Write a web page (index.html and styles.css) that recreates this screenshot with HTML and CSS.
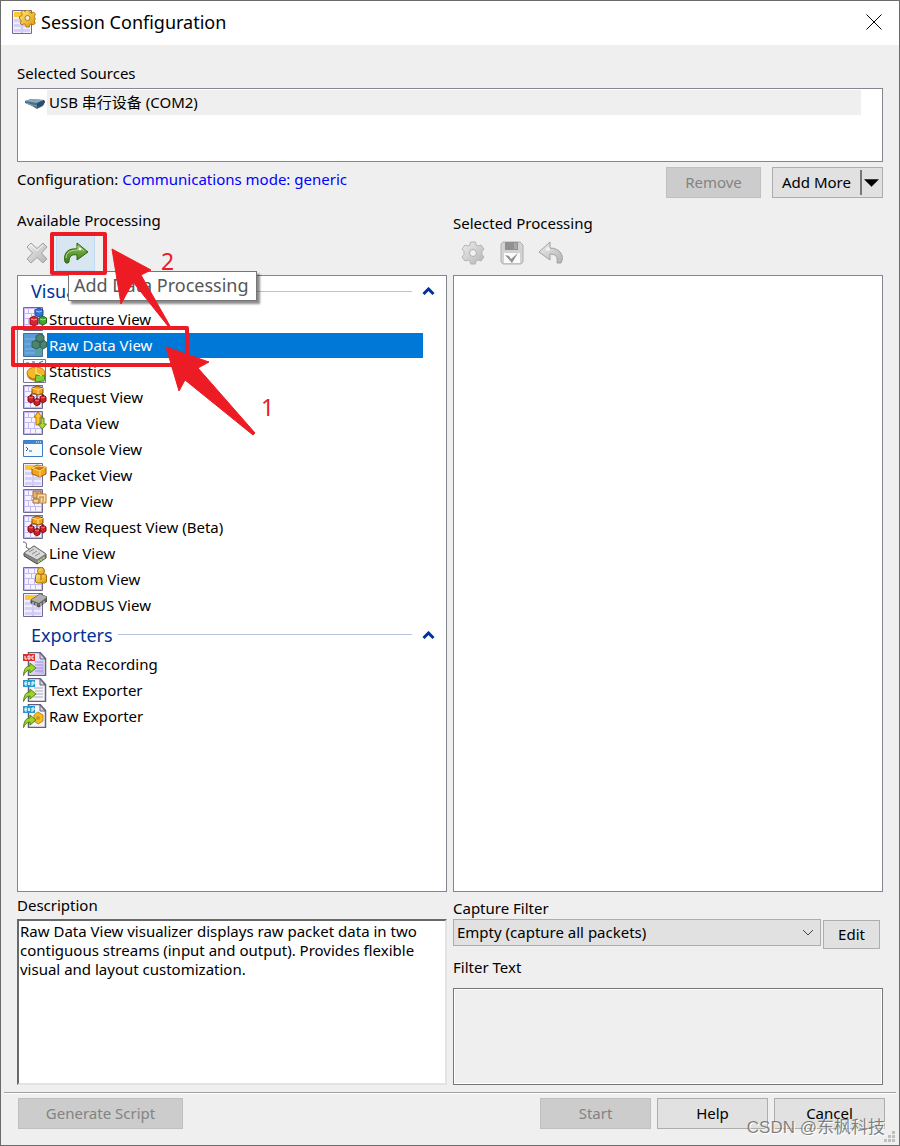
FILE: index.html
```html
<!DOCTYPE html>
<html lang="en">
<head>
    <meta charset="UTF-8">
    <meta name="viewport" content="width=device-width, initial-scale=1">
    <title>Session Configuration</title>
    <link rel="stylesheet" href="styles.css">
</head>
<body>
    <!-- Shared icon parts -->
    <svg class="icon-defs" aria-hidden="true">
        <defs>
            <linearGradient id="lilac" x1="0" y1="0" x2="1" y2="1">
                <stop offset="0" stop-color="#ffffff"/>
                <stop offset="1" stop-color="#bdb0f5"/>
            </linearGradient>
            <linearGradient id="gold" x1="0" y1="0" x2="1" y2="1">
                <stop offset="0" stop-color="#ffe680"/>
                <stop offset="1" stop-color="#dc9a08"/>
            </linearGradient>
            <linearGradient id="green" x1="0" y1="0" x2="0" y2="1">
                <stop offset="0" stop-color="#8cc04b"/>
                <stop offset="1" stop-color="#3c7c1c"/>
            </linearGradient>
            <linearGradient id="silver" x1="0" y1="0" x2="1" y2="1">
                <stop offset="0" stop-color="#eeeeee"/>
                <stop offset="1" stop-color="#b4b4b4"/>
            </linearGradient>
            <symbol id="grid" viewBox="0 0 24 24">
                <path d="M.5 .5h19v23H.5z" fill="#c3b8f5" stroke="#6d6a94"/>
                <path d="M2 2h3v4H2zM6 2h5v4H6zM12 2h6v4h-6zM2 7h6v4H2zM9 7h4v4H9zM14 7h4v4h-4zM2 12h3v5H2zM6 12h5v5H6zM12 12h6v5h-6zM2 18h5v4H2zM8 18h4v4H8zM13 18h5v4h-5z" fill="#f6f4ff"/>
            </symbol>
            <symbol id="sheet" viewBox="0 0 24 24">
                <path d="M.5 .5h19v23H.5z" fill="#f0edff" stroke="#6d6a94"/>
                <path d="M2 2h16v5H2z" fill="#ffc832"/>
                <path d="M2 9h7v3H2zM11 9h7v3h-7zM2 14h7v3H2zM11 14h7v3h-7zM2 19h7v3H2zM11 19h7v3h-7z" fill="#d6cff8"/>
                <path d="M10 8v15" stroke="#b3a9e0"/>
            </symbol>
            <symbol id="boxes" viewBox="0 0 24 24">
                <path d="M8 13V9h12v4M14 8v6" fill="none" stroke="#5c3030"/>
                <path d="m9 3 5-2 6 2v5l-4 2-7-2z" fill="#f0a21b" stroke="#915006"/>
                <path d="m9 3 6 2 5-2M15 5v4" fill="none" stroke="#ffe195"/>
                <path d="m5 12 3-2 3 2v4l-3 2-3-2zM17 12l3-2 3 2v4l-3 2-3-2zM11 15l3-2 3 2v4l-3 2-3-2z" fill="#cf1e24" stroke="#7c0d12"/>
                <path d="m6 12 2 1 2-1M18 12l2 1 2-1M12 15l2 1 2-1" fill="none" stroke="#f5827c"/>
            </symbol>
            <symbol id="export-page" viewBox="0 0 24 24">
                <path d="M5.500 .5H17l5.500 6v17h-17z" fill="#f6f5fb" stroke="#62607c" stroke-width="1.500"/>
                <path d="M17 1v6h5z" fill="#d8d4e8" stroke="#62607c"/>
            </symbol>
            <symbol id="export-arrow" viewBox="0 0 24 24">
                <path d="M.5 23.500C1 17 3 14 7 14v-3l6 5-6 5v-3c-3 0-5 2-6.500 5.500z" fill="#9ed32a" stroke="#4f8414"/>
            </symbol>
        </defs>
    </svg>

    <main class="dialog">
        <header class="titlebar">
            <svg class="icon" viewBox="0 0 24 24" aria-hidden="true">
                <use href="#sheet"/>
                <path d="m14.500 0 3 .2.500 2.300 1.500.700 2-1.200 2 2.200-1.200 2 .7 1.500v2l-.8 1.300 1.200 2-2 2-2-1.200-1.500.700-.7 2.500h-3l-.7-2.500-1.500-.7-2 1.200-2-2 1.200-2-.7-1.500L7.500 9V6.500l2.200-.7.600-1.500-1.100-2 2-2 2 1.200z" fill="url(#gold)" stroke="#b57a0a"/>
                <circle cx="15.500" cy="8" r="2.500" fill="#f4f1e0" stroke="#b57a0a"/>
            </svg>
            <h1 class="title">Session Configuration</h1>
            <button class="close-button" type="button" aria-label="Close">
                <svg viewBox="0 0 16 16"><path d="m.5.500 15 15M15.500.500l-15 15" stroke="#000" fill="none"/></svg>
            </button>
        </header>

        <form class="content">
            <section class="sources">
                <h2 class="label">Selected Sources</h2>
                <ul class="source-list">
                    <li class="source">
                        <svg class="icon" viewBox="0 0 24 24" aria-hidden="true">
                            <path d="m2 10 6-2 13 1 1 2-2 4-6 3-5-3-7-3z" fill="#4b6f8b"/>
                            <path d="m2 10 6-2 13 1-7 3z" fill="#88a9bd"/>
                            <path d="m14 12 7-3 1 2-2 3-6 3z" fill="#2d4d67"/>
                            <path d="m3 12 6 2 5 1" stroke="#7d9bb0" fill="none"/>
                        </svg>
                        <span class="source-name">USB 串行设备 (COM2)</span>
                    </li>
                </ul>
            </section>

            <div class="config-row">
                <p class="config-text">Configuration: <a href="#mode">Communications mode: generic</a></p>
                <button class="button remove-button" type="button" disabled>Remove</button>
                <div class="split-button">
                    <button class="split-main" type="button">Add More</button>
                    <button class="split-arrow" type="button" aria-label="More sources">
                        <svg viewBox="0 0 16 8"><path d="M0 0h16L8 8z"/></svg>
                    </button>
                </div>
            </div>

            <div class="columns">
                <section class="column available">
                    <h2 class="label">Available Processing</h2>
                    <div class="toolbar">
                        <button class="tool" type="button" aria-label="Delete" disabled>
                            <svg class="icon" viewBox="0 0 24 24">
                                <path d="m6 2 6 5.500L18 2l4 4-5.500 6 5.500 6-4 4-6-5.500L6 22l-4-4 5.500-6L2 6z" fill="url(#silver)" stroke="#a0a0a0" stroke-linejoin="round"/>
                                <path d="m4 6 2-2 6 5.500L18 4" fill="none" stroke="#f4f4f4"/>
                            </svg>
                        </button>
                        <button class="tool tool-active" type="button" aria-label="Add Data Processing">
                            <svg class="icon" viewBox="0 0 24 24">
                                <path d="M1 21C-1 12 4 7 13 8V2l11 9-11 8v-5c-5-1-8 1-8 7-1 1.500-3 1.500-4 0z" fill="url(#green)" stroke="#2e6116" stroke-linejoin="round"/>
                                <path d="M2 17c0-6 5-8 12-8V5l6 5" fill="none" stroke="#b2d982"/>
                                <circle cx="16" cy="8" r="1.500" fill="#fff"/>
                            </svg>
                        </button>
                        <span class="tooltip" role="tooltip">Add Data Processing</span>
                    </div>

                    <div class="list">
                        <div class="group">
                            <h3 class="group-name">Visualizers</h3>
                            <button class="collapse" type="button" aria-label="Collapse Visualizers"><svg viewBox="0 0 12 8"><path d="m1 7 5-5 5 5" fill="none" stroke="#003399" stroke-width="3"/></svg></button>
                        </div>
                        <ul class="items">
                            <li class="item">
                                <svg class="icon" viewBox="0 0 24 24"><use href="#grid"/>
                                    <path d="m12 3 4-2 4 2v5l-4 2-4-2z" fill="#2f76d2" stroke="#174b94"/>
                                    <path d="m7 11 4-2 4 2v6l-4 2-4-2z" fill="#d92532" stroke="#8d111b"/>
                                    <path d="m16 11 4-2 3.500 2v5L20 18l-4-2z" fill="#3fa62d" stroke="#20621a"/>
                                    <path d="m13 4 3 1 3-1M8 12l3 1 3-1M17 12l3 1 3-1" fill="none" stroke="#fff" opacity=".6"/>
                                </svg>
                                <span class="item-name">Structure View</span>
                            </li>
                            <li class="item selected">
                                <svg class="icon" viewBox="0 0 24 24">
                                    <path d="M.5 .5h19v23H.5z" fill="#5b9bd5" stroke="#3f6f9c"/>
                                    <path d="M2 6h11M2 11h9M2 16h10M2 20h10" stroke="#7fb9d8"/>
                                    <path d="M12 15h7v8h-7z" fill="#5aa0a0"/>
                                    <path d="m13 3 4-2 4 2v5l-4 2-4-2zM9 9l4-2 4 2v5l-4 2-4-2zM17 9l3-2 3.500 2v5L20 16l-3-2z" fill="#4f8567" stroke="#2e6260"/>
                                </svg>
                                <span class="item-name">Raw Data View</span>
                            </li>
                            <li class="item">
                                <svg class="icon" viewBox="0 0 24 24">
                                    <path d="M.5 .5h22v23H.5z" fill="#fafaff" stroke="#77758f"/>
                                    <path d="M3 4h3M9 3h3M16 4l4-2" stroke="#54536a"/>
                                    <ellipse cx="13" cy="16" rx="9" ry="6" fill="#bd7b0b"/>
                                    <ellipse cx="13" cy="14" rx="9" ry="6" fill="#f6b82b" stroke="#c07e0c"/>
                                    <path d="m13 16 9 1-1 5-9 1z" fill="#83cf31" stroke="#3d8716"/>
                                    <path d="M13 8v6l6 3" fill="none" stroke="#fff0a6"/>
                                </svg>
                                <span class="item-name">Statistics</span>
                            </li>
                            <li class="item">
                                <svg class="icon" viewBox="0 0 24 24"><use href="#grid"/><use href="#boxes"/></svg>
                                <span class="item-name">Request View</span>
                            </li>
                            <li class="item">
                                <svg class="icon" viewBox="0 0 24 24"><use href="#grid"/>
                                    <path d="m15 1 4 5h-2v8h-4V6h-2z" fill="#ffc32a" stroke="#b47809"/>
                                    <path d="M18 7h3v6h2.500L19 18l-4-5h3z" fill="#b4d936" stroke="#57851a"/>
                                </svg>
                                <span class="item-name">Data View</span>
                            </li>
                            <li class="item">
                                <svg class="icon" viewBox="0 0 24 24">
                                    <path d="M.5 3.500h19v16H.5z" fill="#f5faff" stroke="#3c7dc0"/>
                                    <path d="M1 4h18v3H1z" fill="#3d87d0"/>
                                    <path d="M13 5h5" stroke="#fff" stroke-dasharray="1 1"/>
                                    <path d="m3 10 2 2-2 2M6 14h3" fill="none" stroke="#315d92"/>
                                </svg>
                                <span class="item-name">Console View</span>
                            </li>
                            <li class="item">
                                <svg class="icon" viewBox="0 0 24 24"><use href="#sheet"/>
                                    <path d="m9 5 5-3 9 2v7l-6 3-8-3z" fill="#f2a41d" stroke="#a25d08"/>
                                    <path d="m9 5 8 3 6-4-8-1zM17 8v6" fill="#c87910" stroke="#ffda75"/>
                                </svg>
                                <span class="item-name">Packet View</span>
                            </li>
                            <li class="item">
                                <svg class="icon" viewBox="0 0 24 24"><use href="#grid"/>
                                    <path d="M10 2h8v7h-8z" fill="#e1b87c" stroke="#a56b31"/>
                                    <path d="M14 5h9v9h-9z" fill="#fae0ad" stroke="#b97a36"/>
                                    <path d="M10 10h6v4h-6z" fill="#f4d091" stroke="#a56b31"/>
                                    <path d="M16 8h5M17 8v5M20 8v5M12 4h4" stroke="#b97a36"/>
                                </svg>
                                <span class="item-name">PPP View</span>
                            </li>
                            <li class="item">
                                <svg class="icon" viewBox="0 0 24 24"><use href="#grid"/><use href="#boxes"/></svg>
                                <span class="item-name">New Request View (Beta)</span>
                            </li>
                            <li class="item">
                                <svg class="icon" viewBox="0 0 24 24">
                                    <path d="M0 1c4 0 4 3 3 5l4 3" fill="none" stroke="#555"/>
                                    <path d="m1 12 10-7 12 8v4l-9 6L1 15z" fill="#858585" stroke="#4b4b4b"/>
                                    <path d="m1 12 10-7 12 8-9 6z" fill="#d9d9d9" stroke="#777"/>
                                    <path d="m6 11 5-3M9 13l5-3M12 15l5-3" stroke="#888"/>
                                    <path d="m15 21 7-5" stroke="#b0d85d" stroke-width="2" stroke-dasharray="2 1"/>
                                </svg>
                                <span class="item-name">Line View</span>
                            </li>
                            <li class="item">
                                <svg class="icon" viewBox="0 0 24 24"><use href="#grid"/>
                                    <path d="M12.500 9q0-2 2-2h7q2 0 2 2v6l-2 1h-7l-2-1z" fill="url(#gold)" stroke="#a77105"/>
                                    <circle cx="18" cy="4" r="3.500" fill="url(#gold)" stroke="#a77105"/>
                                    <path d="M18 8v5" stroke="#9b680c"/>
                                </svg>
                                <span class="item-name">Custom View</span>
                            </li>
                            <li class="item">
                                <svg class="icon" viewBox="0 0 24 24"><use href="#sheet"/>
                                    <path d="m8 7 9-6 7 3v4l-8 6-8-4z" fill="#656565" stroke="#444"/>
                                    <path d="m8 7 9-6 7 3-8 6z" fill="#b0b0b0"/>
                                    <path d="M10 9v3M13 10v3M18 10v3M21 8v3" stroke="#ddd"/>
                                </svg>
                                <span class="item-name">MODBUS View</span>
                            </li>
                        </ul>

                        <div class="group">
                            <h3 class="group-name">Exporters</h3>
                            <button class="collapse" type="button" aria-label="Collapse Exporters"><svg viewBox="0 0 12 8"><path d="m1 7 5-5 5 5" fill="none" stroke="#003399" stroke-width="3"/></svg></button>
                        </div>
                        <ul class="items">
                            <li class="item">
                                <svg class="icon" viewBox="0 0 24 24"><use href="#export-page"/>
                                    <path d="M7 2h9v6h5v14H7z" fill="url(#lilac)"/>
                                    <path d="M12 10h8M12 13h8M12 16h8M12 19h8" stroke="#a194d8"/>
                                    <path d="M0 2h12v7H0z" fill="#e02e2e"/>
                                    <path d="M2 4v3h2M5 4h2v3H5zM11 4H9v3h2" fill="none" stroke="#fff"/>
                                    <use href="#export-arrow"/>
                                </svg>
                                <span class="item-name">Data Recording</span>
                            </li>
                            <li class="item">
                                <svg class="icon" viewBox="0 0 24 24"><use href="#export-page"/>
                                    <path d="M11 10h9M12 13h8M12 16h8M11 19h9" stroke="#aaa"/>
                                    <path d="M0 2h12v7H0z" fill="#239bd0"/>
                                    <path d="M4 4H2v3h2M2 5.500h2M5 4l2 3M7 4 5 7M9 8V4h2v2H9" fill="none" stroke="#fff"/>
                                    <use href="#export-arrow"/>
                                </svg>
                                <span class="item-name">Text Exporter</span>
                            </li>
                            <li class="item">
                                <svg class="icon" viewBox="0 0 24 24"><use href="#export-page"/>
                                    <path d="m11 11 4-3 5 3v6l-5 3-4-3z" fill="#efbd25" stroke="#c98b08"/>
                                    <circle cx="15" cy="14" r="2" fill="#cf970c"/>
                                    <path d="M0 2h12v7H0z" fill="#239bd0"/>
                                    <path d="M4 4H2v3h2M2 5.500h2M5 4l2 3M7 4 5 7M9 8V4h2v2H9" fill="none" stroke="#fff"/>
                                    <use href="#export-arrow"/>
                                </svg>
                                <span class="item-name">Raw Exporter</span>
                            </li>
                        </ul>
                    </div>

                    <!-- Step markers drawn over the list -->
                    <div class="steps">
                        <svg viewBox="0 0 280 220" aria-hidden="true">
                            <g fill="none" stroke="#ed1c24" stroke-width="4" stroke-linejoin="round">
                                <path d="M42 24h53v39H42z"/>
                                <path d="M3 118h174v37H3z"/>
                            </g>
                            <g fill="#ed1c24" stroke="#ed1c24" stroke-linejoin="round">
                                <path d="m102 39 39 21-10 5 29 51h-2l-35-44-12 22z"/>
                                <path d="m156 137 43 15-11 6 57 65-2 2-68-55-6 11z"/>
                            </g>
                        </svg>
                        <span class="step-number step-one">1</span>
                        <span class="step-number step-two">2</span>
                    </div>
                </section>

                <section class="column chosen">
                    <h2 class="label">Selected Processing</h2>
                    <div class="toolbar">
                        <button class="tool" type="button" aria-label="Settings" disabled>
                            <svg class="icon" viewBox="0 0 24 24">
                                <path d="M9.500 1h5l.5 3 2 1 3-1 3 4-2 2.500v3l2 2.500-3 4-3-1-2 1-.5 3h-5L9 20l-2-1-3 1-3-4 2-2.500v-3L1 8l3-4 3 1 2-1z" fill="url(#silver)" stroke="#b4b4b4" stroke-linejoin="round"/>
                                <circle cx="12" cy="12" r="3.500" fill="#efefef" stroke="#b0b0b0"/>
                            </svg>
                        </button>
                        <button class="tool" type="button" aria-label="Save" disabled>
                            <svg class="icon" viewBox="0 0 24 24">
                                <path d="M3 1h17l3 3v17l-2 2H3l-2-2V3z" fill="#d2d2d2" stroke="#b0b0b0"/>
                                <path d="M5 1h13v8H5z" fill="#909090"/>
                                <path d="M14 2h3v6h-3z" fill="#a9a9a9"/>
                                <path d="M4 12h16v10H4z" fill="#fafafa"/>
                                <path d="m5 14 4 1 2 3 7-6-6 10z" fill="#929292"/>
                            </svg>
                        </button>
                        <button class="tool" type="button" aria-label="Undo" disabled>
                            <svg class="icon" viewBox="0 0 24 24">
                                <path d="M11 1v6c10 0 15 8 11 15h-4c1-6-1-9-7-9v6L0 11z" fill="url(#silver)" stroke="#a0a0a0" stroke-linejoin="round"/>
                                <circle cx="9" cy="8" r="2" fill="#f2f2f2"/>
                            </svg>
                        </button>
                    </div>
                    <div class="list"></div>
                </section>
            </div>

            <div class="details">
                <section class="description">
                    <label class="label" for="description">Description</label>
                    <textarea id="description" class="description-text" readonly>Raw Data View visualizer displays raw packet data in two contiguous streams (input and output). Provides flexible visual and layout customization.</textarea>
                </section>
                <section class="filter">
                    <label class="label" for="filter">Capture Filter</label>
                    <div class="filter-row">
                        <div class="select-box">
                            <select id="filter">
                                <option>Empty (capture all packets)</option>
                            </select>
                            <svg viewBox="0 0 12 8" aria-hidden="true"><path d="m1 1 5 5 5-5" fill="none" stroke="#444"/></svg>
                        </div>
                        <button class="button edit-button" type="button">Edit</button>
                    </div>
                    <label class="label" for="filter-text">Filter Text</label>
                    <textarea id="filter-text" class="filter-text" readonly></textarea>
                </section>
            </div>
        </form>

        <footer class="footer">
            <button class="button script-button" type="button" disabled>Generate Script</button>
            <button class="button" type="button" disabled>Start</button>
            <button class="button" type="button">Help</button>
            <button class="button" type="button">Cancel</button>
            <span class="watermark">CSDN @东枫科技</span>
            <svg class="grip" viewBox="0 0 12 12" aria-hidden="true"><path d="M8 0h3v3H8zM4 4h3v3H4zM8 4h3v3H8zM0 8h3v3H0zM4 8h3v3H4zM8 8h3v3H8z" fill="#bfbfbf"/></svg>
        </footer>
    </main>
</body>
</html>
```
FILE: styles.css
```css
* {
    box-sizing: border-box;
}

body {
    margin: 0;
    background-color: #efefef;
    color: #000;
    font-family: "Noto Sans", "Noto Sans CJK SC", sans-serif;
    font-size: 15px;
    line-height: 20px;
}

h1,
h2,
h3,
p,
ul {
    margin: 0;
    padding: 0;
    font-weight: normal;
}

ul {
    list-style: none;
}

button,
select,
textarea {
    margin: 0;
    padding: 0;
    border-radius: 0;
    color: inherit;
    font: inherit;
}

svg {
    display: block;
}

.icon-defs {
    position: absolute;
    width: 0;
    height: 0;
}

.icon {
    flex: none;
    width: 24px;
    height: 24px;
}

.dialog {
    display: flex;
    flex-direction: column;
    min-height: 100vh;
    border: 1px solid #6b6b6b;
}

.titlebar {
    display: flex;
    align-items: center;
    gap: 5px;
    height: 44px;
    padding: 0 17px 2px 11px;
    background-color: #fff;
}

.title {
    flex: 1;
    font-size: 18px;
    line-height: 24px;
}

.close-button {
    border: none;
    background: none;
}

.close-button svg {
    width: 16px;
    height: 16px;
}

.content {
    display: flex;
    flex: 1;
    flex-direction: column;
    padding: 18px 16px 7px;
}

.label {
    display: block;
    font-size: 15px;
    line-height: 20px;
}

.source-list {
    height: 74px;
    margin-top: 5px;
    padding: 1px 21px 0 5px;
    border: 1px solid #828790;
    background-color: #fff;
}

.source {
    display: flex;
    align-items: center;
}

.source-name {
    flex: 1;
    height: 25px;
    padding-left: 2px;
    background-color: #efefef;
    line-height: 25px;
}

.config-row {
    display: flex;
    margin-top: 5px;
}

.config-text {
    flex: 1;
    padding-top: 2px;
}

.config-text a {
    color: #0000ff;
    text-decoration: none;
}

.button {
    width: 111px;
    height: 31px;
    padding-bottom: 2px;
    border: 1px solid #adadad;
    background-color: #e1e1e1;
}

.button:disabled {
    border-color: #bfbfbf;
    background-color: #ccc;
    color: #838383;
}

.remove-button {
    width: 95px;
    margin-right: 11px;
}

.split-button {
    display: flex;
    align-items: center;
    width: 111px;
    height: 31px;
    border: 1px solid #adadad;
    background-color: #e1e1e1;
}

.split-main {
    flex: 1;
    padding-bottom: 2px;
    border: none;
    background: none;
}

.split-arrow {
    display: flex;
    align-items: center;
    height: 25px;
    padding: 0 3px 0 2px;
    border: none;
    border-left: 2px solid #777;
    background: none;
}

.split-arrow svg {
    width: 15px;
    height: 8px;
}

.columns,
.details {
    display: grid;
    grid-template-columns: 1fr 1fr;
    gap: 6px;
}

.columns {
    flex: 1;
    margin-top: 12px;
}

.column {
    position: relative;
    display: flex;
    flex-direction: column;
}

.chosen .label {
    padding-top: 3px;
}

.toolbar {
    position: relative;
    display: flex;
    align-items: center;
    height: 45px;
}

.chosen .toolbar {
    height: 42px;
    padding-bottom: 2px;
}

.tool {
    display: flex;
    align-items: center;
    justify-content: center;
    width: 39px;
    height: 36px;
    border: none;
    background: none;
}

.tool-active {
    border: 1px solid #c0dcf3;
    background-color: #d8e6f2;
}

.tooltip {
    position: absolute;
    top: 41px;
    left: 51px;
    z-index: 1;
    padding: 1px 7px 3px 5px;
    border: 1px solid #767676;
    background-color: #fff;
    box-shadow: 3px 3px 2px rgba(0, 0, 0, 0.45);
    color: #575757;
    font-size: 18px;
    line-height: 24px;
    white-space: nowrap;
}

.list {
    flex: 1;
    border: 1px solid #828790;
    background-color: #fff;
}

.group {
    display: flex;
    align-items: center;
    height: 30px;
    padding: 0 11px 0 13px;
    color: #003399;
}

.items + .group {
    height: 33px;
}

.group-name {
    font-size: 18px;
    line-height: 24px;
}

.group::after {
    content: "";
    flex: 1;
    order: 1;
    height: 1px;
    margin: 0 10px 0 5px;
    background-color: #b5c5e0;
}

.collapse {
    order: 2;
    border: none;
    background: none;
}

.collapse svg {
    width: 13px;
    height: 8px;
}

.item {
    display: flex;
    align-items: center;
    height: 26px;
    padding: 0 23px 0 5px;
}

.item-name {
    flex: 1;
    height: 25px;
    padding-left: 2px;
    line-height: 25px;
}

.selected .item-name {
    background-color: #0078d7;
    color: #fff;
}

.steps {
    position: absolute;
    top: 0;
    left: -7px;
    z-index: 2;
    width: 280px;
    color: #ed1c24;
    pointer-events: none;
}

.steps svg {
    width: 280px;
    height: 220px;
    overflow: visible;
}

.step-number {
    position: absolute;
    font-size: 23px;
    line-height: 28px;
}

.step-one {
    top: 183px;
    left: 251px;
}

.step-two {
    top: 37px;
    left: 151px;
}

.details {
    margin-top: 3px;
}

.description,
.filter {
    display: flex;
    flex-direction: column;
}

.description-text {
    flex: 1;
    min-height: 166px;
    margin-top: 4px;
    padding: 1px;
    border: 2px solid;
    border-color: #696969 #e3e3e3 #e3e3e3 #696969;
    background-color: #fff;
    line-height: 19px;
    outline: none;
    resize: none;
}

.filter {
    padding-top: 3px;
}

.filter-row {
    display: flex;
    gap: 2px;
    margin-top: 1px;
    padding-right: 3px;
}

.select-box {
    position: relative;
    flex: 1;
}

.select-box select {
    width: 100%;
    height: 27px;
    padding: 0 24px 1px 3px;
    border: 1px solid #adadad;
    background-color: #e1e1e1;
    appearance: none;
}

.select-box svg {
    position: absolute;
    top: 10px;
    right: 7px;
    width: 12px;
    height: 8px;
    pointer-events: none;
}

.edit-button {
    width: 57px;
    height: 29px;
    margin-top: 1px;
}

.filter-row + .label {
    margin-top: 8px;
}

.filter-text {
    flex: 1;
    margin-top: 11px;
    border: 1px solid #777;
    background-color: #efefef;
    box-shadow: inset 0 0 0 1px #fff;
    outline: none;
    resize: none;
}

.footer {
    position: relative;
    display: flex;
    gap: 6px;
    margin: 0 3px;
    padding: 5px 11px 16px 14px;
    border-top: 1px solid #a0a0a0;
    box-shadow: inset 0 1px 0 #fff;
}

.script-button {
    width: 165px;
    margin-right: auto;
}

.watermark {
    position: absolute;
    right: 11px;
    bottom: 5px;
    color: rgba(90, 90, 90, 0.75);
    font-family: "Liberation Sans", "Noto Sans CJK SC", sans-serif;
    font-size: 17px;
    line-height: 24px;
    text-shadow: 1px 1px 0 #fff;
}

.grip {
    position: absolute;
    right: 0;
    bottom: 2px;
    width: 12px;
    height: 12px;
}
```
